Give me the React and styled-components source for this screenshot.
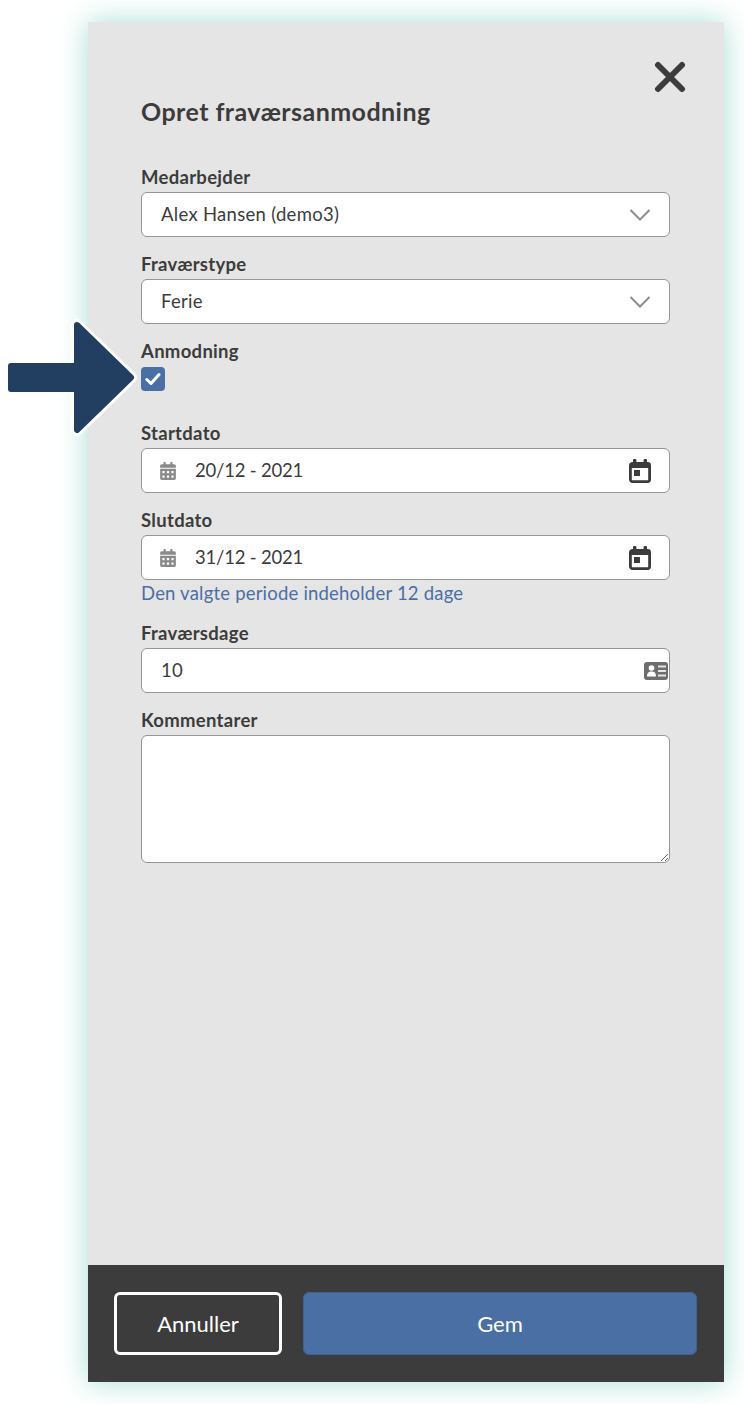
import React from 'react'
import styled, { createGlobalStyle } from 'styled-components'
import { FaCalendarAlt } from 'react-icons/fa'

const GlobalStyle = createGlobalStyle`
    body {
        margin: 0;
        background: #ffffff;
        font-family: "Lato", "Liberation Sans", sans-serif;
        color: #3c3c3c;
    }
`

const Chevron = () => (
    <ChevronSvg viewBox="0 0 22 14">
        <polyline points="1.5,2 11,11.5 20.5,2" fill="none" stroke="#8e8e8e" strokeWidth="2" />
    </ChevronSvg>
)

const EventIcon = () => (
    <svg width="22" height="24" viewBox="0 0 22 24">
        <rect x="4" y="0" width="3.4" height="6" rx="1" fill="#3c3c3c" />
        <rect x="14.6" y="0" width="3.4" height="6" rx="1" fill="#3c3c3c" />
        <rect x="1.4" y="4.4" width="19.2" height="18.2" rx="2" fill="#ffffff" stroke="#3c3c3c" strokeWidth="2.8" />
        <rect x="1.4" y="4" width="19.2" height="5" fill="#3c3c3c" />
        <rect x="5" y="11" width="6" height="6" fill="#3c3c3c" />
    </svg>
)

const IdCardIcon = () => (
    <svg width="24" height="18" viewBox="0 0 24 18">
        <rect x="0" y="0" width="24" height="18" rx="3" fill="#6e6e6e" />
        <circle cx="7.5" cy="6" r="2.8" fill="#ffffff" />
        <path d="M3 14.5 C3 10.5 5 9.5 7.5 9.5 C10 9.5 12 10.5 12 14.5 Z" fill="#ffffff" />
        <rect x="14" y="3.5" width="8" height="2" fill="#e5e5e5" />
        <rect x="14" y="8" width="8" height="2" fill="#e5e5e5" />
        <rect x="14" y="12.5" width="8" height="2" fill="#e5e5e5" />
    </svg>
)

const DateField = ({ value }) => (
    <Field>
        <LeadIcon><FaCalendarAlt size={18} /></LeadIcon>
        <Value $spacing="-0.2px">{value}</Value>
        <EventIcon />
    </Field>
)

const App = () => {
    return (
        <Page>
            <GlobalStyle />
            <Pointer viewBox="0 0 140 140">
                <polygon
                    points="77,15 131,67.5 77,120"
                    fill="#ffffff"
                    stroke="#ffffff"
                    strokeWidth="12"
                    strokeLinejoin="round"
                />
                <polygon
                    points="77,15 131,67.5 77,120"
                    fill="#223e60"
                    stroke="#223e60"
                    strokeWidth="6"
                    strokeLinejoin="round"
                />
                <rect x="8" y="53" width="72" height="29" rx="3" fill="#223e60" />
            </Pointer>
            <Panel>
                <Body>
                    <CloseRow>
                        <svg width="32" height="32" viewBox="0 0 32 32">
                            <path d="M4 4 L28 28 M28 4 L4 28" stroke="#3c3c3c" strokeWidth="6" strokeLinecap="round" />
                        </svg>
                    </CloseRow>
                    <Title>Opret fraværsanmodning</Title>

                    <Label>Medarbejder</Label>
                    <Field>
                        <Value>Alex Hansen (demo3)</Value>
                        <Chevron />
                    </Field>
                    <Gap />

                    <Label>Fraværstype</Label>
                    <Field>
                        <Value>Ferie</Value>
                        <Chevron />
                    </Field>
                    <Gap />

                    <Label>Anmodning</Label>
                    <Check>
                        <svg width="16" height="14" viewBox="0 0 16 14">
                            <polyline
                                points="1.8,7.5 6,11.5 14,2.5"
                                fill="none"
                                stroke="#ffffff"
                                strokeWidth="3"
                                strokeLinecap="round"
                                strokeLinejoin="round"
                            />
                        </svg>
                    </Check>

                    <Label>Startdato</Label>
                    <DateField value="20/12 - 2021" />
                    <Gap />

                    <Label>Slutdato</Label>
                    <DateField value="31/12 - 2021" />
                    <Hint>Den valgte periode indeholder 12 dage</Hint>

                    <Label>Fraværsdage</Label>
                    <Field>
                        <Value>10</Value>
                        <CardSlot><IdCardIcon /></CardSlot>
                    </Field>
                    <Gap />

                    <Label>Kommentarer</Label>
                    <Comments />
                </Body>
                <Footer>
                    <CancelButton>Annuller</CancelButton>
                    <SaveButton>Gem</SaveButton>
                </Footer>
            </Panel>
        </Page>
    )
}

export default App

const Page = styled.div`
    position: relative;
    width: 744px;
    height: 1404px;
    padding: 22px 20px 22px 88px;
    box-sizing: border-box;
`

const Pointer = styled.svg`
    position: absolute;
    left: 0;
    top: 310px;
    width: 140px;
    height: 140px;
    z-index: 2;
`

const Panel = styled.div`
    display: flex;
    flex-direction: column;
    height: 100%;
    background: #e5e5e5;
    box-shadow: 0 0 28px #a6dfd3;
`

const Body = styled.div`
    flex: 1;
    display: flex;
    flex-direction: column;
    padding: 0 54px 0 53px;
`

const CloseRow = styled.div`
    display: flex;
    justify-content: flex-end;
    height: 32px;
    margin: 39px -16px 0 0;
`

const Title = styled.h1`
    margin: 3px 0 41px;
    font-size: 25px;
    line-height: 30px;
    font-weight: 700;
    letter-spacing: 0.45px;
`

const Label = styled.div`
    font-size: 18.5px;
    line-height: 20px;
    font-weight: 700;
    letter-spacing: 0.3px;
    margin-bottom: 5px;
`

const Field = styled.div`
    display: flex;
    align-items: center;
    height: 45px;
    box-sizing: border-box;
    padding: 0 18px 0 19px;
    background: #ffffff;
    border: 1px solid #969696;
    border-radius: 6px;
    flex-shrink: 0;
`

const Value = styled.div`
    flex: 1;
    font-size: 18.5px;
    letter-spacing: ${props => props.$spacing || '0.3px'};
    padding-bottom: 2px;
`

const ChevronSvg = styled.svg`
    width: 22px;
    height: 14px;
`

const LeadIcon = styled.div`
    display: flex;
    color: #8a8a8a;
    margin: 0 18px 0 -2px;
`

const CardSlot = styled.div`
    display: flex;
    margin-right: -17px;
`

const Gap = styled.div`
    height: 17px;
    flex-shrink: 0;
`

const Check = styled.div`
    display: flex;
    align-items: center;
    justify-content: center;
    width: 24px;
    height: 24px;
    border-radius: 4px;
    background: #4a6fa5;
    margin-top: 1px;
    margin-bottom: 32px;
`

const Hint = styled.div`
    font-size: 18.5px;
    line-height: 22px;
    letter-spacing: 0.2px;
    color: #4a6fa5;
    margin: 2px 0 19px;
`

const Comments = styled.textarea`
    display: block;
    height: 128px;
    box-sizing: border-box;
    background: #ffffff;
    border: 1px solid #969696;
    border-radius: 6px;
    resize: vertical;
    outline: none;
`

const Footer = styled.div`
    display: flex;
    gap: 21px;
    height: 117px;
    box-sizing: border-box;
    padding: 27px 27px 27px 26px;
    background: #3c3c3c;
`

const CancelButton = styled.button`
    width: 168px;
    box-sizing: border-box;
    background: transparent;
    border: 3px solid #ffffff;
    border-radius: 6px;
    color: #ffffff;
    font-family: inherit;
    font-size: 22px;
    font-weight: 400;
`

const SaveButton = styled.button`
    flex: 1;
    box-sizing: border-box;
    background: #4a6fa5;
    border: 1px solid #41618f;
    border-radius: 6px;
    color: #ffffff;
    font-family: inherit;
    font-size: 22px;
    font-weight: 400;
`
